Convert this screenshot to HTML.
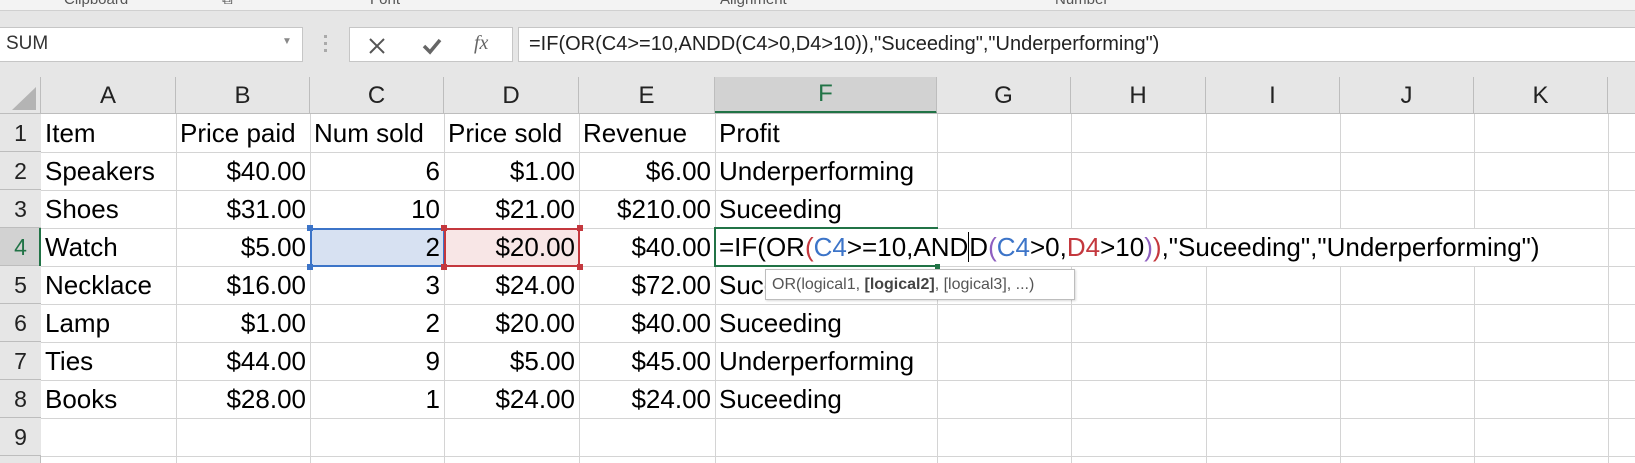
<!DOCTYPE html>
<html><head><meta charset="utf-8">
<style>
*{margin:0;padding:0;box-sizing:border-box}
body{width:1635px;height:463px;overflow:hidden;background:#e6e6e6;font-family:"Liberation Sans",sans-serif;position:relative}
.a{position:absolute}
.rib{left:0;top:0;width:1635px;height:11px;background:#f3f3f3;border-bottom:1px solid #d0d0d0;overflow:hidden}
.rib span{position:absolute;top:-9px;font-size:15px;color:#555}
.box{background:#fff;border:1px solid #c6c6c6}
.grid{left:41px;top:114px;width:1594px;height:349px;background:#fff}
.hl{position:absolute;left:41px;width:1594px;height:1px;background:#d4d4d4}
.vl{position:absolute;top:114px;width:1px;height:349px;background:#d4d4d4}
.ch{position:absolute;top:77px;height:37px;border-right:1px solid #bdbdbd;text-align:center;font-size:24px;line-height:37px;color:#222}
.rh{position:absolute;left:0;width:41px;height:38px;border-bottom:1px solid #bdbdbd;text-align:center;font-size:23px;line-height:38px;color:#222;background:#e6e6e6}
.c{position:absolute;height:38px;line-height:38px;font-size:26px;color:#000;white-space:nowrap;padding:0 4px}
.r{text-align:right}
</style></head><body>
<div class="a rib"><span style="left:64px">Clipboard</span><span style="left:222px">⧉</span><span style="left:370px">Font</span><span style="left:720px">Alignment</span><span style="left:1055px">Number</span></div>

<div class="a box" style="left:-1px;top:27px;width:304px;height:35px"><span class="a" style="left:6px;top:5px;font-size:19px;color:#333">SUM</span><span class="a" style="left:282px;top:8px;font-size:10px;color:#888">▼</span></div>
<div class="a" style="left:324px;top:35px;width:3px;height:3px;background:#aaa"></div>
<div class="a" style="left:324px;top:42px;width:3px;height:3px;background:#aaa"></div>
<div class="a" style="left:324px;top:49px;width:3px;height:3px;background:#aaa"></div>
<div class="a box" style="left:349px;top:27px;width:164px;height:35px">
<svg class="a" style="left:18px;top:9px" width="18" height="18"><path d="M2 2L16 16M16 2L2 16" stroke="#555" stroke-width="2"/></svg>
<svg class="a" style="left:72px;top:9px" width="20" height="18"><path d="M2 9L8 15L18 3" stroke="#666" stroke-width="3.5" fill="none"/></svg>
<span class="a" style="left:124px;top:4px;font-family:'Liberation Serif',serif;font-style:italic;font-size:20px;color:#666">fx</span></div>
<div class="a box" style="left:518px;top:27px;width:1130px;height:35px"><span class="a" style="left:10px;top:5px;font-size:20px;color:#222">=IF(OR(C4&gt;=10,ANDD(C4&gt;0,D4&gt;10)),"Suceeding","Underperforming")</span></div>

<div class="a" style="left:0;top:77px;width:41px;height:37px;border-right:1px solid #bdbdbd;background:#e6e6e6"><svg width="40" height="37"><path d="M36 10L36 33L12 33Z" fill="#b4b4b4"/></svg></div>
<div class="ch" style="left:41px;width:135px">A</div>
<div class="ch" style="left:176px;width:134px">B</div>
<div class="ch" style="left:310px;width:134px">C</div>
<div class="ch" style="left:444px;width:135px">D</div>
<div class="ch" style="left:579px;width:136px">E</div>
<div class="ch" style="left:715px;width:222px;background:#d2d2d2;color:#217346;border-bottom:3px solid #217346;line-height:34px">F</div>
<div class="ch" style="left:937px;width:134px">G</div>
<div class="ch" style="left:1071px;width:135px">H</div>
<div class="ch" style="left:1206px;width:134px">I</div>
<div class="ch" style="left:1340px;width:134px">J</div>
<div class="ch" style="left:1474px;width:134px">K</div>
<div class="a" style="left:0;top:113px;width:1635px;height:1px;background:#bdbdbd"></div>

<div class="a grid"></div>
<div class="hl" style="top:152px"></div><div class="hl" style="top:190px"></div><div class="hl" style="top:228px"></div><div class="hl" style="top:266px"></div><div class="hl" style="top:304px"></div><div class="hl" style="top:342px"></div><div class="hl" style="top:380px"></div><div class="hl" style="top:418px"></div><div class="hl" style="top:456px"></div>
<div class="vl" style="left:176px"></div><div class="vl" style="left:310px"></div><div class="vl" style="left:444px"></div><div class="vl" style="left:579px"></div><div class="vl" style="left:715px"></div><div class="vl" style="left:937px"></div><div class="vl" style="left:1071px"></div><div class="vl" style="left:1206px"></div><div class="vl" style="left:1340px"></div><div class="vl" style="left:1474px"></div><div class="vl" style="left:1608px"></div>

<div class="a" style="left:40px;top:114px;width:1px;height:349px;background:#bdbdbd"></div>
<div class="rh" style="top:114px">1</div><div class="rh" style="top:152px">2</div><div class="rh" style="top:190px">3</div>
<div class="rh" style="top:228px;background:#d2d2d2;color:#217346">4</div>
<div class="rh" style="top:266px">5</div><div class="rh" style="top:304px">6</div><div class="rh" style="top:342px">7</div><div class="rh" style="top:380px">8</div><div class="rh" style="top:418px">9</div>
<div class="a" style="left:39px;top:228px;width:2px;height:38px;background:#217346"></div>

<div class="a" style="left:310px;top:228px;width:135px;height:39px;background:#d7e1f2;border:2px solid #3c74c8"></div>
<div class="a" style="left:444px;top:228px;width:136px;height:39px;background:#f8e6e6;border:2px solid #c4383e"></div>
<div class="a" style="left:307px;top:225px;width:6px;height:6px;background:#3c74c8"></div>
<div class="a" style="left:307px;top:264px;width:6px;height:6px;background:#3c74c8"></div>
<div class="a" style="left:441px;top:225px;width:6px;height:6px;background:#c4383e"></div>
<div class="a" style="left:441px;top:264px;width:6px;height:6px;background:#c4383e"></div>
<div class="a" style="left:577px;top:225px;width:6px;height:6px;background:#c4383e"></div>
<div class="a" style="left:577px;top:264px;width:6px;height:6px;background:#c4383e"></div>

<div class="c" style="left:41px;top:114px">Item</div><div class="c" style="left:176px;top:114px">Price paid</div><div class="c" style="left:310px;top:114px">Num sold</div><div class="c" style="left:444px;top:114px">Price sold</div><div class="c" style="left:579px;top:114px">Revenue</div><div class="c" style="left:715px;top:114px">Profit</div>

<div class="c" style="left:41px;top:152px">Speakers</div><div class="c r" style="left:176px;top:152px;width:134px">$40.00</div><div class="c r" style="left:310px;top:152px;width:134px">6</div><div class="c r" style="left:444px;top:152px;width:135px">$1.00</div><div class="c r" style="left:579px;top:152px;width:136px">$6.00</div><div class="c" style="left:715px;top:152px">Underperforming</div>

<div class="c" style="left:41px;top:190px">Shoes</div><div class="c r" style="left:176px;top:190px;width:134px">$31.00</div><div class="c r" style="left:310px;top:190px;width:134px">10</div><div class="c r" style="left:444px;top:190px;width:135px">$21.00</div><div class="c r" style="left:579px;top:190px;width:136px">$210.00</div><div class="c" style="left:715px;top:190px">Suceeding</div>

<div class="c" style="left:41px;top:228px">Watch</div><div class="c r" style="left:176px;top:228px;width:134px">$5.00</div><div class="c r" style="left:310px;top:228px;width:134px">2</div><div class="c r" style="left:444px;top:228px;width:135px">$20.00</div><div class="c r" style="left:579px;top:228px;width:136px">$40.00</div>

<div class="c" style="left:41px;top:266px">Necklace</div><div class="c r" style="left:176px;top:266px;width:134px">$16.00</div><div class="c r" style="left:310px;top:266px;width:134px">3</div><div class="c r" style="left:444px;top:266px;width:135px">$24.00</div><div class="c r" style="left:579px;top:266px;width:136px">$72.00</div><div class="c" style="left:715px;top:266px">Suceeding</div>

<div class="c" style="left:41px;top:304px">Lamp</div><div class="c r" style="left:176px;top:304px;width:134px">$1.00</div><div class="c r" style="left:310px;top:304px;width:134px">2</div><div class="c r" style="left:444px;top:304px;width:135px">$20.00</div><div class="c r" style="left:579px;top:304px;width:136px">$40.00</div><div class="c" style="left:715px;top:304px">Suceeding</div>

<div class="c" style="left:41px;top:342px">Ties</div><div class="c r" style="left:176px;top:342px;width:134px">$44.00</div><div class="c r" style="left:310px;top:342px;width:134px">9</div><div class="c r" style="left:444px;top:342px;width:135px">$5.00</div><div class="c r" style="left:579px;top:342px;width:136px">$45.00</div><div class="c" style="left:715px;top:342px">Underperforming</div>

<div class="c" style="left:41px;top:380px">Books</div><div class="c r" style="left:176px;top:380px;width:134px">$28.00</div><div class="c r" style="left:310px;top:380px;width:134px">1</div><div class="c r" style="left:444px;top:380px;width:135px">$24.00</div><div class="c r" style="left:579px;top:380px;width:136px">$24.00</div><div class="c" style="left:715px;top:380px">Suceeding</div>

<div class="a" style="left:715px;top:229px;width:860px;height:37px;background:#fff"></div>
<div class="a" style="left:714px;top:227px;width:224px;height:40px;border:2px solid #217346;border-right:none"></div>
<div class="a" style="left:935px;top:264px;width:5px;height:5px;background:#217346"></div>
<div class="c" style="left:715px;top:228px;font-size:26px">=IF(OR<span style="color:#c4383e">(</span><span style="color:#3c74c8">C4</span>&gt;=10,AND<span style="border-left:1px solid #000"></span>D<span style="color:#8e5fc0">(</span><span style="color:#3c74c8">C4</span>&gt;0,<span style="color:#c4383e">D4</span>&gt;10<span style="color:#8e5fc0">)</span><span style="color:#c4383e">)</span>,"Suceeding","Underperforming")</div>

<div class="a" style="left:765px;top:269px;width:310px;height:31px;background:#fff;border:1px solid #bdbdbd;box-shadow:1px 1px 2px rgba(0,0,0,.15);font-size:16px;line-height:29px;color:#555;padding-left:6px;white-space:nowrap">OR(logical1, <b style="color:#444">[logical2]</b>, [logical3], ...)</div>
</body></html>
